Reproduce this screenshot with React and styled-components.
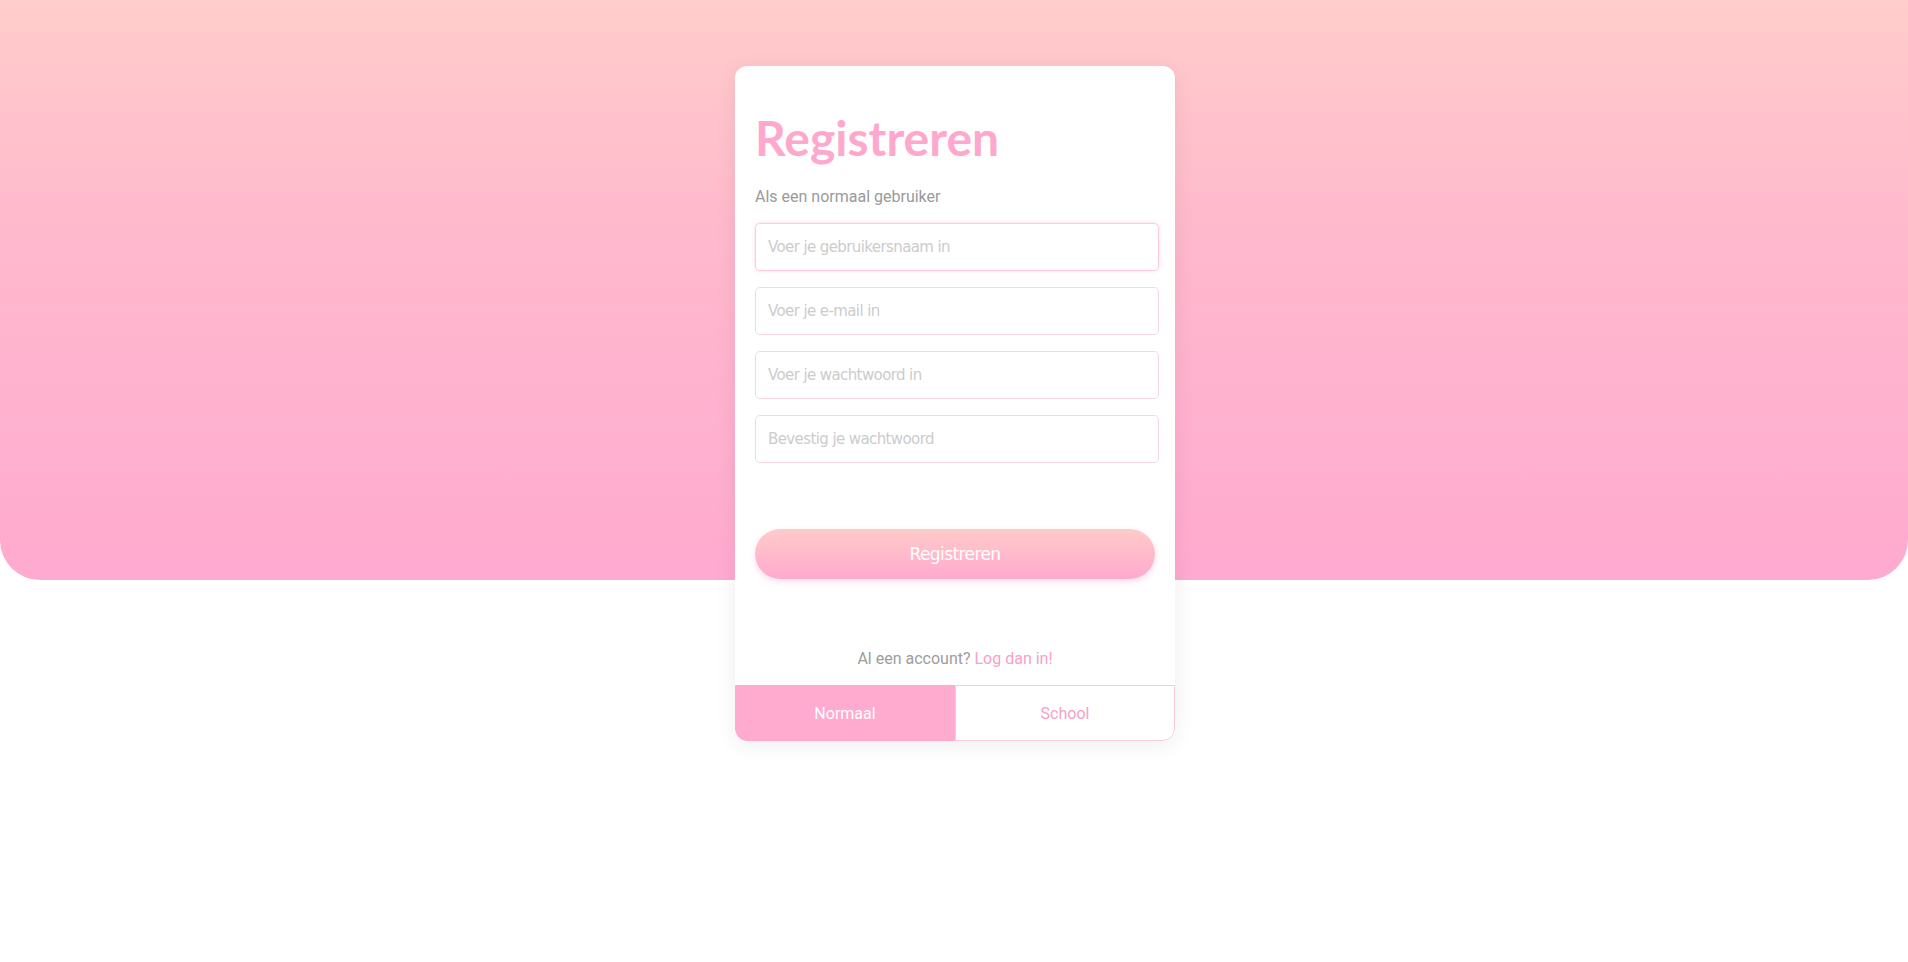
import React from "react";
import styled, { createGlobalStyle } from "styled-components";

const GlobalStyle = createGlobalStyle`
  html, body {
    margin: 0;
    padding: 0;
    background: #fff;
  }
  * {
    box-sizing: border-box;
  }
`;

const App = () => {
  return (
    <>
      <GlobalStyle />
      <Stage>
        <Hero />
        <CardWrap>
          <Card>
            <Body>
              <Title>Registreren</Title>
              <Subtitle>Als een normaal gebruiker</Subtitle>
              <Fields>
                <Input focused placeholder="Voer je gebruikersnaam in" />
                <Input placeholder="Voer je e-mail in" />
                <Input type="password" placeholder="Voer je wachtwoord in" />
                <Input type="password" placeholder="Bevestig je wachtwoord" />
              </Fields>
              <SubmitButton>Registreren</SubmitButton>
              <Footer>
                Al een account? <FooterLink>Log dan in!</FooterLink>
              </Footer>
            </Body>
            <Tabs>
              <Tab active>Normaal</Tab>
              <Tab>School</Tab>
            </Tabs>
          </Card>
        </CardWrap>
      </Stage>
    </>
  );
};

export default App;

const Stage = styled.div`
  display: grid;
  min-height: 962px;
  align-items: start;
`;

const Hero = styled.div`
  grid-area: 1 / 1;
  height: 580px;
  background: linear-gradient(180deg, #ffcdcb 0%, #ffb9cd 40%, #ffaad0 100%);
  border-radius: 0 0 40px 40px;
`;

const CardWrap = styled.div`
  grid-area: 1 / 1;
  display: flex;
  justify-content: center;
  padding-top: 66px;
  padding-left: 2px;
`;

const Card = styled.div`
  width: 440px;
  background: #fff;
  border-radius: 12px;
  box-shadow: 0 4px 22px rgba(0, 0, 0, 0.07);
  overflow: hidden;
  display: flex;
  flex-direction: column;
`;

const Body = styled.div`
  padding: 43px 16px 16px 20px;
  display: flex;
  flex-direction: column;
`;

const Title = styled.h1`
  margin: 0;
  font-family: "Lato", "Open Sans", sans-serif;
  font-weight: 700;
  font-size: 48px;
  line-height: 58px;
  color: #ffa8cd;
`;

const Subtitle = styled.p`
  margin: 20px 0 0;
  font-family: "Roboto", sans-serif;
  font-size: 16px;
  line-height: 20px;
  color: #9a9a9a;
`;

const Fields = styled.div`
  display: flex;
  flex-direction: column;
  gap: 16px;
  margin-top: 16px;
`;

const Input = styled.input.attrs(() => ({ readOnly: true }))`
  width: 100%;
  height: 48px;
  padding: 0 12px;
  border: 1px solid ${({ focused }) => (focused ? "#ffccde" : "#f5d8e2")};
  border-radius: 5px;
  box-shadow: ${({ focused }) => (focused ? "0 0 4px rgba(255, 160, 195, 0.4)" : "none")};
  font-family: "DejaVu Sans", "Liberation Sans", sans-serif;
  font-size: 15px;
  letter-spacing: -0.6px;
  color: #555;
  outline: none;
  background: #fff;

  &::placeholder {
    color: #cccccc;
  }
`;

const SubmitButton = styled.button`
  margin-top: 66px;
  width: 400px;
  height: 50px;
  border: none;
  border-radius: 25px;
  background: linear-gradient(180deg, #ffcbc9 0%, #ffaacf 100%);
  box-shadow: 0 3px 6px rgba(255, 160, 200, 0.35);
  font-family: "DejaVu Sans", "Liberation Sans", sans-serif;
  font-size: 17px;
  letter-spacing: -0.6px;
  color: #fff;
  cursor: pointer;
`;

const Footer = styled.p`
  margin: 70px 0 0;
  text-align: center;
  font-family: "Roboto", sans-serif;
  font-size: 16px;
  line-height: 20px;
  color: #9d9d9d;
  transform: translateX(-2px);
`;

const FooterLink = styled.a`
  color: #f7a1c4;
  text-decoration: none;
  cursor: pointer;
`;

const Tabs = styled.div`
  display: grid;
  grid-template-columns: 1fr 1fr;
  height: 56px;
`;

const Tab = styled.div`
  display: flex;
  align-items: center;
  justify-content: center;
  font-family: "Roboto", sans-serif;
  font-size: 16px;
  color: ${({ active }) => (active ? "#fff" : "#f7a1c4")};
  background: ${({ active }) => (active ? "#ffaacf" : "#fff")};
  border: 1px solid ${({ active }) => (active ? "#ffaacf" : "#f6cadb")};
  border-radius: ${({ active }) => (active ? "0 0 0 12px" : "0 0 12px 0")};
`;
